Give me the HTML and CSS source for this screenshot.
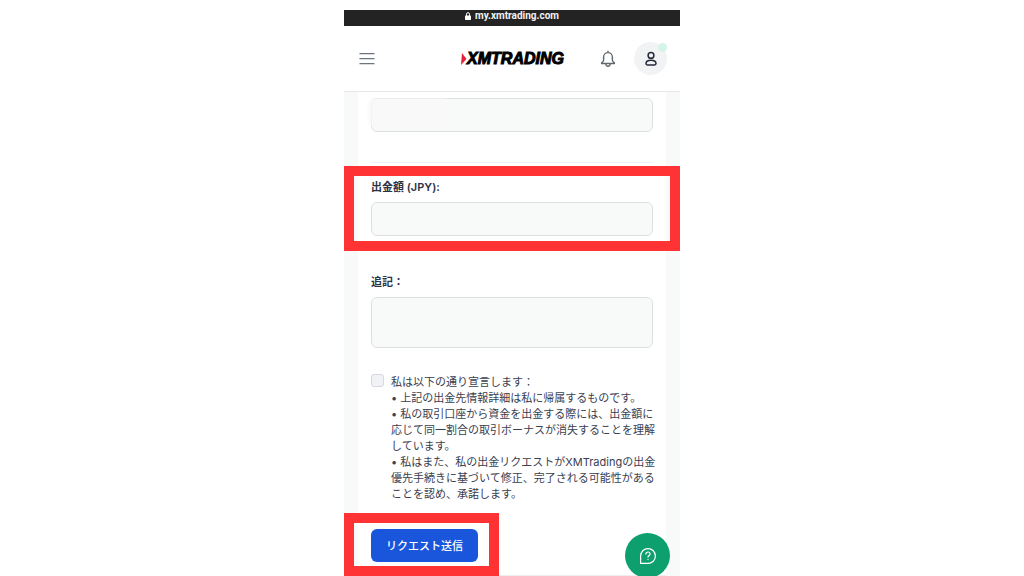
FILE: index.html
```html
<!DOCTYPE html>
<html lang="ja">
<head>
    <meta charset="UTF-8">
    <meta name="viewport" content="width=device-width, initial-scale=1.0">
    <title>XMTrading</title>
    <link rel="stylesheet" href="styles.css">
</head>
<body>
    <div class="phone">
        <div class="url-bar">
            <svg class="lock" viewBox="0 0 6 8" aria-hidden="true">
                <path d="M1.5 4V2.2a1.5 1.5 0 0 1 3 0V4" fill="none" stroke="#fff" stroke-width="1"/>
                <rect x="0" y="3.4" width="6" height="4.6" rx="0.8" fill="#fff"/>
            </svg>
            <span>my.xmtrading.com</span>
        </div>

        <header class="header">
            <button class="icon-btn menu-btn" type="button" aria-label="メニュー">
                <svg width="16" height="14" viewBox="0 0 16 14" fill="none" stroke="#6b7580" stroke-width="1.3" stroke-linecap="round">
                    <path d="M1 1.700h14M1 6.700h14M1 11.700h14"/>
                </svg>
            </button>
            <a class="logo" href="#">
                <svg class="logo-mark" viewBox="0 0 6 12" aria-hidden="true">
                    <path d="M1 0L5.500 6L0 12Z" fill="#e5203a"/>
                </svg>
                <span>XMTRADING</span>
            </a>
            <div class="header-actions">
                <button class="icon-btn" type="button" aria-label="通知">
                    <svg width="16" height="18" viewBox="0 0 16 18" fill="none" stroke="#5f6870" stroke-width="1.4" stroke-linecap="round" stroke-linejoin="round">
                        <path d="M8 1.200v1M3.600 7a4.400 4.400 0 0 1 8.800 0v3.200c0 1 .8 1.800 2 2.600v.7H1.600v-.7c1.200-.8 2-1.600 2-2.600z"/>
                        <path d="M5.800 14c.2 1.500 1 2.300 2.200 2.300s2-.8 2.200-2.300"/>
                    </svg>
                </button>
                <button class="icon-btn avatar" type="button" aria-label="アカウント">
                    <svg width="14" height="16" viewBox="0 0 14 16" fill="none" stroke="#262b3a" stroke-width="1.5" stroke-linejoin="round">
                        <circle cx="7" cy="4.400" r="2.900"/>
                        <path d="M2 12.600c0-2 2-3.300 5-3.300s5 1.300 5 3.300c0 1-.5 1.400-1.400 1.400H3.400C2.500 14 2 13.600 2 12.600z"/>
                    </svg>
                    <span class="status-dot"></span>
                </button>
            </div>
        </header>

        <main class="content">
            <form class="card">
                <div class="masked">
                    <input class="control" type="text" aria-label="口座" readonly>
                </div>

                <hr class="divider">

                <div class="field highlight">
                    <label class="label" for="amount">出金額 (JPY):</label>
                    <input class="control" id="amount" type="text">
                </div>

                <div class="field note">
                    <label class="label" for="note">追記：</label>
                    <textarea class="control control-area" id="note"></textarea>
                </div>

                <div class="declare">
                    <input class="check" id="declare" type="checkbox">
                    <label class="declare-text" for="declare">私は以下の通り宣言します：<br>
                        • 上記の出金先情報詳細は私に帰属するものです。<br>
                        • 私の取引口座から資金を出金する際には、出金額に<br>
                        応じて同一割合の取引ボーナスが消失することを理解<br>
                        しています。<br>
                        • 私はまた、私の出金リクエストがXMTradingの出金<br>
                        優先手続きに基づいて修正、完了される可能性がある<br>
                        ことを認め、承諾します。</label>
                </div>

                <div class="submit highlight">
                    <button class="submit-btn" type="submit">リクエスト送信</button>
                </div>
            </form>
        </main>

        <button class="chat" type="button" aria-label="ヘルプ">
            <svg width="18" height="18" viewBox="0 0 18 18" fill="none" stroke="#fff" stroke-width="1.200" stroke-linecap="round" stroke-linejoin="round">
                <path d="M1.600 16.400V9A7.400 7.400 0 1 1 9 16.400z"/>
                <path d="M6.900 7.100c0-1.300.9-2.100 2.100-2.100s2.100.8 2.100 1.900c0 1.500-2.100 1.600-2.100 3.200"/>
                <path d="M9 12.400v.1"/>
            </svg>
        </button>
    </div>
</body>
</html>
```

FILE: styles.css
```css
* {
    margin: 0;
    padding: 0;
    box-sizing: border-box;
}

body {
    background: #fff;
    color: #3a4050;
    font-family: Inter, "Noto Sans CJK JP", sans-serif;
    font-size: 11px;
    line-height: 16px;
}

button,
input,
textarea {
    font: inherit;
}

.phone {
    position: relative;
    width: 100%;
    max-width: 336px;
    height: calc(100vh - 10px);
    margin: 10px auto 0;
    overflow: hidden;
}

/* Browser address bar */
.url-bar {
    display: flex;
    align-items: center;
    justify-content: center;
    gap: 4px;
    height: 16px;
    padding-bottom: 4px;
    background: #232323;
    color: #f2f2f2;
    font-family: Roboto, sans-serif;
    font-size: 10px;
    font-weight: 700;
    line-height: 12px;
}

.lock {
    width: 6px;
    height: 8px;
}

/* Header */
.header {
    display: grid;
    grid-template-columns: 1fr auto 1fr;
    align-items: center;
    height: 66px;
    padding: 0 13px 0 14px;
    border-bottom: 1px solid #e6e8ea;
}

.icon-btn {
    display: flex;
    align-items: center;
    justify-content: center;
    border: none;
    background: none;
    cursor: pointer;
}

.menu-btn {
    justify-self: start;
    width: 18px;
    height: 18px;
}

.logo {
    display: flex;
    align-items: center;
    color: #000;
    font-family: "Liberation Sans", sans-serif;
    font-size: 16px;
    font-style: italic;
    font-weight: 700;
    text-decoration: none;
    -webkit-text-stroke: 1px #000;
}

.logo-mark {
    width: 6px;
    height: 12px;
}

.header-actions {
    display: flex;
    align-items: center;
    justify-content: flex-end;
    gap: 18px;
}

.avatar {
    position: relative;
    width: 33px;
    height: 33px;
    border-radius: 50%;
    background: #f2f3f5;
}

.status-dot {
    position: absolute;
    top: 1px;
    right: 0;
    width: 9px;
    height: 9px;
    border-radius: 50%;
    background: #d3f4e8;
}

/* Form card */
.content {
    padding: 0 14px;
    background: #f7faf9;
}

.card {
    padding: 6px 13px 13px;
    border-bottom: 1px solid #eceeef;
    background: #fff;
}

.control {
    display: block;
    width: 100%;
    height: 34px;
    padding: 0 10px;
    border: 1px solid #dcdfe1;
    border-radius: 6px;
    outline: none;
    background: #f8faf9;
    resize: none;
}

.control-area {
    height: 51px;
}

/* Smudge hiding the account value */
.masked {
    position: relative;
}

.masked::after {
    content: '';
    position: absolute;
    top: 0;
    left: -3px;
    width: 88px;
    height: 29px;
    border-radius: 8px 20px 20px 8px;
    background: #f8f9f8;
    filter: blur(1px);
    opacity: 0.8;
}

.divider {
    margin: 30px 0 16px;
    border: none;
    border-top: 1px solid #edeff0;
}

.label {
    display: block;
    margin-bottom: 7px;
    color: #2c3243;
    font-weight: 600;
}

.note {
    margin-top: 38px;
}

.declare {
    display: flex;
    align-items: flex-start;
    gap: 7px;
    margin-top: 26px;
}

.check {
    flex: none;
    width: 13px;
    height: 13px;
    border: 1px solid #d6d9de;
    border-radius: 3px;
    background: #f1f2f5;
    appearance: none;
}

.declare-text {
    white-space: nowrap;
}

.submit {
    width: fit-content;
    margin-top: 27px;
}

.submit-btn {
    display: block;
    height: 33px;
    padding: 0 15px;
    border: none;
    border-radius: 6px;
    background: #1a56db;
    color: #fff;
    font-weight: 500;
    cursor: pointer;
}

/* Red frames around the parts to fill in */
.highlight {
    position: relative;
}

.highlight::after {
    content: '';
    position: absolute;
    border: 10px solid #ff3333;
    pointer-events: none;
}

.field.highlight::after {
    inset: -13px -27px -15px;
}

.submit.highlight::after {
    inset: -16px -21px -14px -27px;
}

/* Chat button */
.chat {
    position: absolute;
    right: 10px;
    bottom: -2px;
    display: flex;
    align-items: center;
    justify-content: center;
    width: 45px;
    height: 45px;
    border: none;
    border-radius: 50%;
    background: #0e9f6e;
    cursor: pointer;
}
```
